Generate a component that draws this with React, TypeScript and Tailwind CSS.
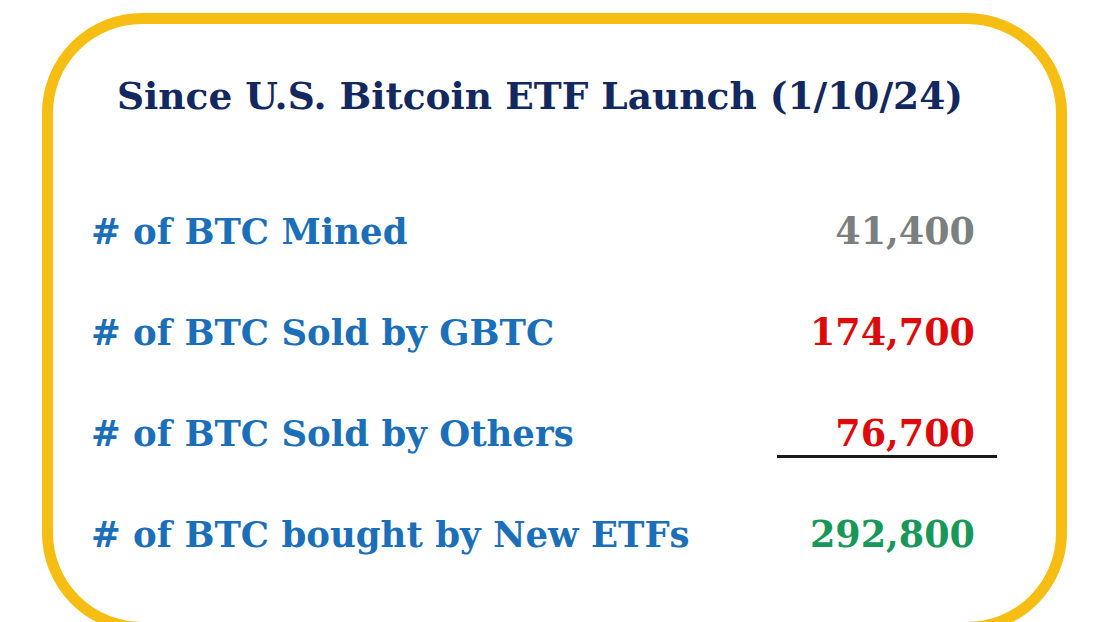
const rows = [
  { label: '# of BTC Mined', value: '41,400', color: 'text-[#7b7f80]' },
  { label: '# of BTC Sold by GBTC', value: '174,700', color: 'text-[#dc0a0a]' },
  { label: '# of BTC Sold by Others', value: '76,700', color: 'text-[#dc0a0a]', rule: true },
  { label: '# of BTC bought by New ETFs', value: '292,800', color: 'text-[#17985a]' },
];

export default function App() {
  return (
    <div className="h-[622px] w-[1119px] overflow-hidden bg-white pl-[42px] pt-[13px] font-['DejaVu_Serif',serif] font-bold">
      <div className="h-[620px] w-[1025px] rounded-[100px] border-[11px] border-[#f6bd12]">
        <h1 className="pl-[64px] pt-[54px] text-[37.5px] leading-none text-[#13285e]">
          Since U.S. Bitcoin ETF Launch (1/10/24)
        </h1>
        <div className="mt-[95px] flex flex-col gap-[59px] pl-[38px] pr-[81px]">
          {rows.map((r) => (
            <div key={r.label} className="flex items-center justify-between leading-[42px]">
              <span className="text-[35.5px] text-[#1b6fb8]">{r.label}</span>
              <span className={`relative text-[36.5px] ${r.color}`}>
                {r.value}
                {r.rule && (
                  <span className="absolute right-[-22px] top-[42px] h-[3px] w-[220px] bg-[#1a1a1a]" />
                )}
              </span>
            </div>
          ))}
        </div>
      </div>
    </div>
  );
}
